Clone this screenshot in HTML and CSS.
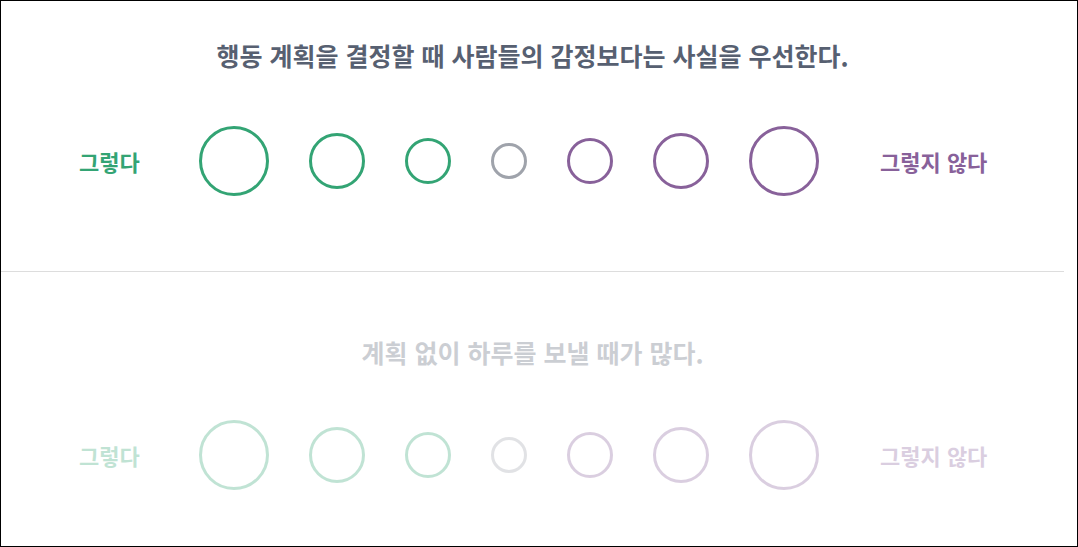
FILE: index.html
```html
<!DOCTYPE html>
<html lang="ko">
<head>
<meta charset="utf-8">
<title>Questions</title>
<link rel="stylesheet" href="styles.css">
</head>
<body>
<div class="page">
  <section class="question question--first">
    <div class="question__title">행동 계획을 결정할 때 사람들의 감정보다는 사실을 우선한다.</div>
    <div class="options">
      <span class="label label--agree">그렇다</span>
      <div class="circles">
        <span class="circle circle--agree circle--xl"></span>
        <span class="circle circle--agree circle--lg"></span>
        <span class="circle circle--agree circle--md"></span>
        <span class="circle circle--neutral circle--sm"></span>
        <span class="circle circle--disagree circle--md"></span>
        <span class="circle circle--disagree circle--lg"></span>
        <span class="circle circle--disagree circle--xl"></span>
      </div>
      <span class="label label--disagree">그렇지 않다</span>
    </div>
  </section>
  <section class="question question--inactive">
    <div class="question__title">계획 없이 하루를 보낼 때가 많다.</div>
    <div class="options">
      <span class="label label--agree">그렇다</span>
      <div class="circles">
        <span class="circle circle--agree circle--xl"></span>
        <span class="circle circle--agree circle--lg"></span>
        <span class="circle circle--agree circle--md"></span>
        <span class="circle circle--neutral circle--sm"></span>
        <span class="circle circle--disagree circle--md"></span>
        <span class="circle circle--disagree circle--lg"></span>
        <span class="circle circle--disagree circle--xl"></span>
      </div>
      <span class="label label--disagree">그렇지 않다</span>
    </div>
  </section>
</div>
</body>
</html>
```
FILE: styles.css
```css
* { box-sizing: border-box; }
html, body { margin: 0; padding: 0; background: #fff; }
body {
  font-family: "Noto Sans CJK KR", "Noto Sans", sans-serif;
}
.page {
  width: 1078px;
  height: 547px;
  border: 1px solid #000;
  overflow: hidden;
  padding-right: 13px;
}
.question {
  padding: 63px 0 75px;
}
.question--first {
  padding-top: 37px;
  border-bottom: 1px solid #dddddd;
}
.question--inactive { opacity: 0.3; }
.question__title {
  text-align: center;
  font-size: 25px;
  line-height: 34px;
  font-weight: 700;
  color: #576071;
  margin-bottom: 54px;
  white-space: nowrap;
}
.question--inactive .question__title { margin-bottom: 51px; }
.options {
  display: flex;
  align-items: center;
  justify-content: center;
  height: 70px;
}
.label {
  font-size: 22px;
  font-weight: 700;
  white-space: nowrap;
  line-height: 30px;
}
.label--agree { color: #33a474; width: 60px; text-align: right; margin-right: 60px; }
.label--disagree { color: #88619a; width: 106px; text-align: left; margin-left: 61px; }
.circles {
  display: flex;
  align-items: center;
  gap: 40px;
}
.circle {
  display: block;
  border-radius: 50%;
  border: 3px solid;
  background: #fff;
}
.circle--agree { border-color: #33a474; }
.circle--disagree { border-color: #88619a; }
.circle--neutral { border-color: #9fa3ab; }
.circle--xl { width: 70px; height: 70px; }
.circle--lg { width: 56px; height: 56px; }
.circle--md { width: 46px; height: 46px; }
.circle--sm { width: 36px; height: 36px; }
```
